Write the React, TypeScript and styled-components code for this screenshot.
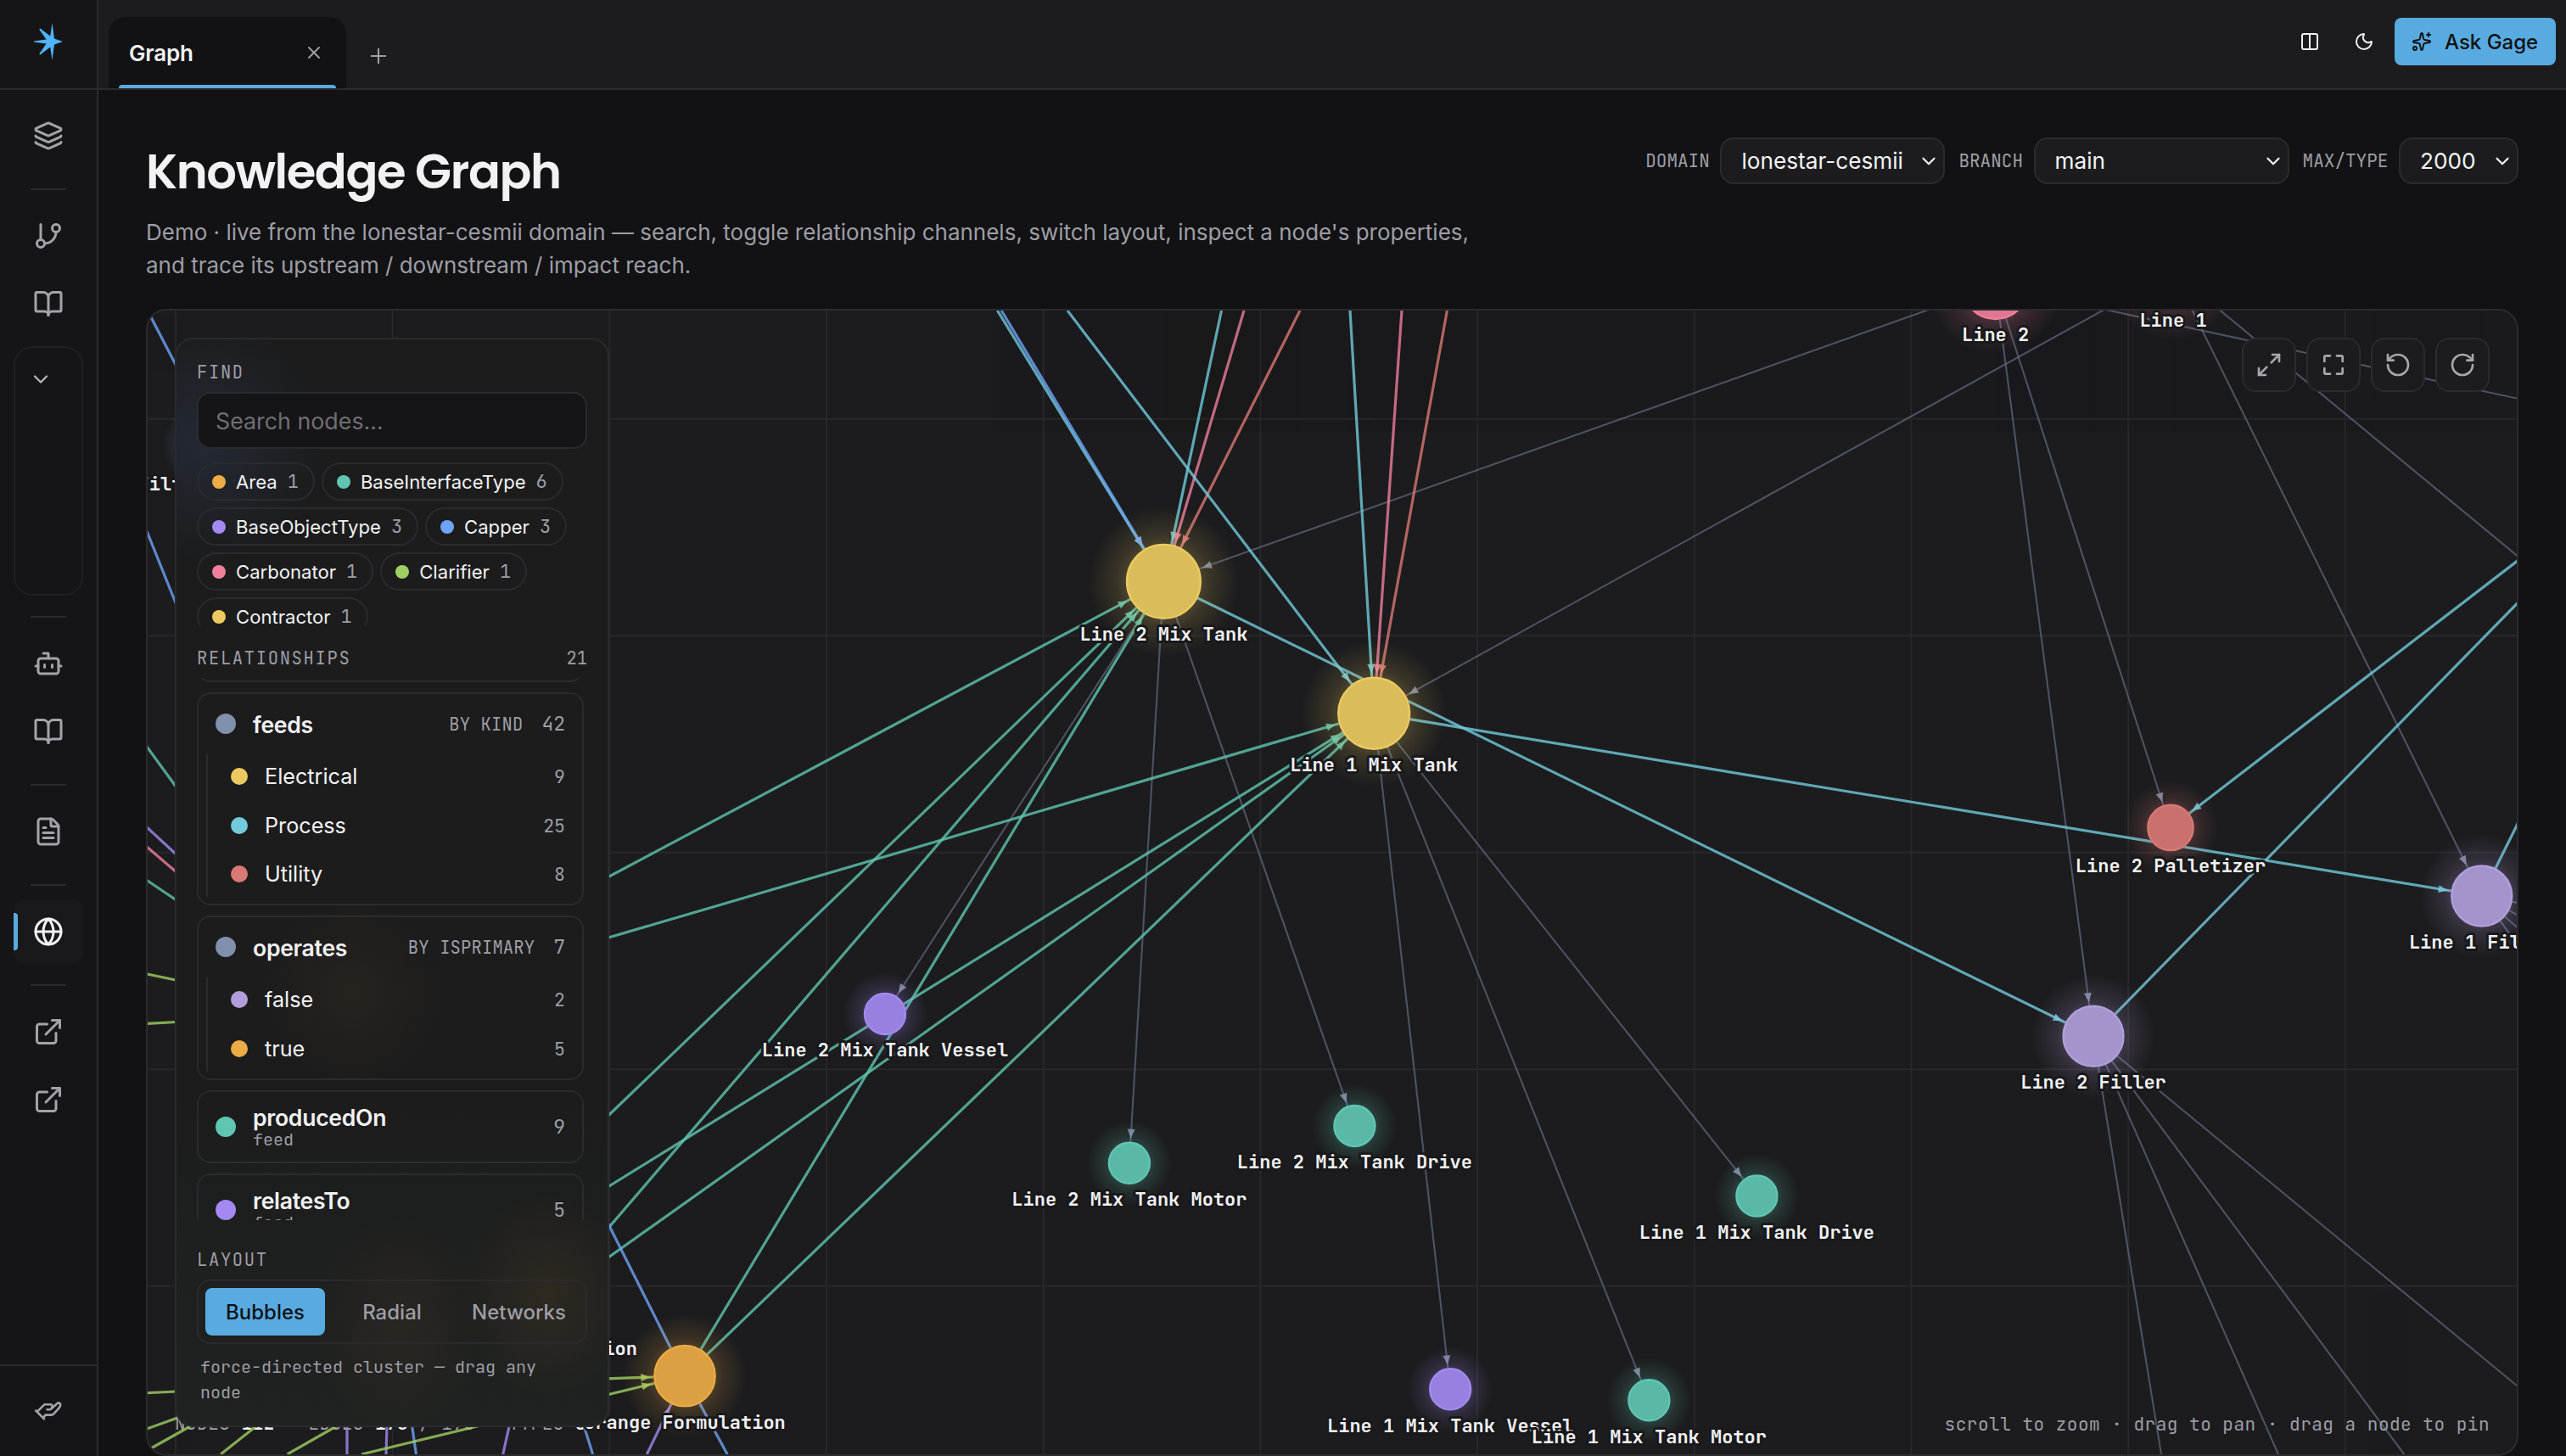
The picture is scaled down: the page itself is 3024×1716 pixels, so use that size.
import React from 'react';
import styled, { createGlobalStyle, css } from 'styled-components';
import {
  Layers, GitBranch, BookOpen, ChevronDown, Bot, FileText, Globe, ExternalLink,
  X, Plus, Columns2, Moon, Sparkles, Maximize2, RotateCcw, RotateCw,
} from 'lucide-react';

const SANS = `Inter, "Liberation Sans", sans-serif`;
const MONO = `"JetBrains Mono", "DejaVu Sans Mono", monospace`;

const c = {
  page: '#121214',
  rail: '#151517',
  surface: '#1c1c1e',
  line: '#2b2b2e',
  text: '#f2f2f3',
  muted: '#9e9ea6',
  accent: '#58abe0',
  ink: '#101214',
};

const hue = {
  yellow: '#ecca60',
  teal: '#5fc6b2',
  purple: '#a389f1',
  lavender: '#b19edb',
  red: '#d97874',
  orange: '#ecab44',
  pink: '#f07f9c',
  blue: '#6ea5f8',
  cyan: '#72cbdd',
  green: '#9fd062',
  slate: '#8190ad',
};

const Global = createGlobalStyle`
  *, *::before, *::after { box-sizing: border-box; }
  html, body { margin: 0; background: ${c.page}; overflow: hidden; }
  button { font: inherit; color: inherit; background: none; border: 0; padding: 0; margin: 0; }
`;

const Shell = styled.div`
  display: grid;
  grid-template-columns: 116px 1fr;
  width: 3024px;
  height: 1716px;
  overflow: hidden;
  background: ${c.page};
  color: ${c.text};
  font-family: ${SANS};
`;

/* ---------- rail ---------- */
const Rail = styled.nav`
  display: flex;
  flex-direction: column;
  border-right: 2px solid ${c.line};
  background: ${c.rail};
`;
const Brand = styled.div`
  height: 106px;
  flex: none;
  border-bottom: 2px solid ${c.line};
  svg { display: block; }
`;
const RailBody = styled.div`
  flex: 1;
  display: flex;
  flex-direction: column;
  gap: 4px;
  padding: 16px 16px 0;
`;
const RailItem = styled.button<{ $active?: boolean }>`
  position: relative;
  display: flex;
  align-items: center;
  justify-content: center;
  width: 82px;
  height: 76px;
  flex: none;
  border-radius: 12px;
  color: ${p => (p.$active ? c.text : '#a3a3ab')};
  background: ${p => (p.$active ? '#19191b' : 'transparent')};
  ${p => p.$active && css`
    &::before {
      content: '';
      position: absolute;
      left: 0;
      top: 16px;
      width: 5px;
      height: 44px;
      border-radius: 0 4px 4px 0;
      background: ${c.accent};
    }
  `}
`;
const RailRule = styled.div`
  width: 42px;
  height: 2px;
  flex: none;
  margin: 20px auto 12px;
  background: ${c.line};
`;
const RailGroup = styled.div`
  width: 82px;
  height: 294px;
  flex: none;
  margin-top: 8px;
  padding: 23px 0 0 16px;
  border: 2px solid #202023;
  border-radius: 22px;
  color: #b4b4bb;
`;
const RailFoot = styled.div`
  display: flex;
  align-items: center;
  justify-content: center;
  height: 108px;
  border-top: 2px solid ${c.line};
  color: #a3a3ab;
`;

/* ---------- top bar ---------- */
const Main = styled.div`
  display: flex;
  flex-direction: column;
  min-width: 0;
`;
const TopBar = styled.header`
  display: flex;
  align-items: flex-end;
  height: 106px;
  flex: none;
  padding: 0 12px;
  border-bottom: 2px solid ${c.line};
  background: ${c.surface};
`;
const Tab = styled.div`
  position: relative;
  display: flex;
  align-items: center;
  justify-content: space-between;
  width: 280px;
  height: 84px;
  padding: 0 26px 0 24px;
  border-radius: 20px 20px 0 0;
  background: ${c.page};
  font-size: 26px;
  font-weight: 600;
  letter-spacing: -0.2px;
  &::after {
    content: '';
    position: absolute;
    left: 12px;
    right: 12px;
    bottom: 0;
    height: 4px;
    border-radius: 4px 4px 0 0;
    background: ${c.accent};
  }
  svg { color: ${c.muted}; }
`;
const NewTab = styled.button`
  display: flex;
  margin: 0 0 24px 24px;
  color: ${c.muted};
`;
const TopActions = styled.div`
  display: flex;
  align-items: center;
  height: 56px;
  margin: 0 0 27px auto;
`;
const IconSlot = styled.span`
  display: flex;
  width: 64px;
  justify-content: center;
`;
const AskButton = styled.button`
  display: flex;
  align-items: center;
  gap: 15px;
  width: 190px;
  height: 56px;
  margin-left: 4px;
  padding-left: 20px;
  border-radius: 8px;
  background: ${c.accent};
  color: ${c.ink};
  font-size: 24px;
  font-weight: 500;
  white-space: nowrap;
`;

/* ---------- page ---------- */
const Page = styled.main`
  flex: 1;
  display: flex;
  flex-direction: column;
  padding: 56px 56px 0;
  min-height: 0;
`;
const PageHead = styled.div`
  display: flex;
  justify-content: space-between;
  height: 202px;
  flex: none;
`;
const Title = styled.h1`
  margin: 0;
  font-family: Poppins, ${SANS};
  font-size: 56px;
  line-height: 82px;
  font-weight: 600;
  letter-spacing: -1.4px;
  font-feature-settings: 'cv11' 1, 'ss03' 1;
`;
const Lead = styled.p`
  margin: 10px 0 0;
  color: ${c.muted};
  font-size: 26px;
  line-height: 39px;
  white-space: nowrap;
`;
const Filters = styled.div`
  display: flex;
  align-items: center;
  height: 55px;
`;
const FilterLabel = styled.label`
  margin: 0 12.6px 0 16px;
  color: ${c.muted};
  font-family: ${MONO};
  font-size: 21px;
`;
const Select = styled.div<{ $w: number }>`
  display: flex;
  align-items: center;
  justify-content: space-between;
  width: ${p => p.$w}px;
  height: 55px;
  padding: 0 4px 0 23px;
  border: 2px solid ${c.line};
  border-radius: 16px;
  background: ${c.surface};
  font-size: 26.2px;
`;

/* ---------- canvas ---------- */
const Canvas = styled.section`
  position: relative;
  height: 1352px;
  flex: none;
  border: 2px solid ${c.line};
  border-radius: 24px;
  background: ${c.surface};
  overflow: hidden;
`;
const Scene = styled.svg`
  position: absolute;
  inset: 0;
  text {
    font-family: ${MONO};
    font-size: 22px;
    font-weight: 700;
    fill: ${c.text};
    stroke: #19191b;
    stroke-width: 6px;
    stroke-linejoin: round;
    paint-order: stroke;
  }
`;
const Stats = styled.div`
  position: absolute;
  left: 32px;
  bottom: 24px;
  display: flex;
  gap: 40px;
  color: ${c.muted};
  font-family: ${MONO};
  font-size: 21px;
  line-height: 24px;
  letter-spacing: 0.46px;
  white-space: pre;
  b { color: ${c.text}; }
`;
const Hint = styled.div`
  position: absolute;
  right: 32px;
  bottom: 23px;
  color: ${c.muted};
  font-family: ${MONO};
  font-size: 21px;
  line-height: 24px;
  letter-spacing: 0.51px;
`;
const Tools = styled.div`
  position: absolute;
  top: 32px;
  right: 32px;
  display: flex;
  gap: 12px;
`;
const Tool = styled.button`
  display: flex;
  align-items: center;
  justify-content: center;
  width: 64px;
  height: 64px;
  border: 2px solid ${c.line};
  border-radius: 16px;
  background: ${c.surface};
  color: #a6a6ad;
`;

/* ---------- side panel ---------- */
const Panel = styled.aside`
  position: absolute;
  left: 32px;
  top: 32px;
  width: 512px;
  height: 1284px;
  display: flex;
  flex-direction: column;
  padding: 27px 24px 0;
  border: 2px solid ${c.line};
  border-radius: 22px;
  background:
    radial-gradient(140px 140px at 34px 120px, rgba(80, 120, 190, 0.14), transparent),
    radial-gradient(110px 110px at 207px 770px, rgba(230, 160, 50, 0.05), transparent),
    radial-gradient(100px 130px at 262px 1160px, rgba(230, 160, 50, 0.05), transparent),
    radial-gradient(100px 120px at 436px 1125px, rgba(230, 160, 50, 0.08), transparent),
    linear-gradient(#1c1c1d 70%, #202221);
`;
const Caption = styled.div`
  display: flex;
  justify-content: space-between;
  height: 24px;
  flex: none;
  color: ${c.muted};
  font-family: ${MONO};
  font-size: 20.5px;
  line-height: 24px;
  letter-spacing: 1.65px;
  span { letter-spacing: 0; }
`;
const Search = styled.div`
  height: 67px;
  flex: none;
  margin: 11px 0 16px;
  padding: 0 20px;
  border: 2px solid ${c.line};
  border-radius: 16px;
  background: ${c.rail};
  color: #6f6f75;
  font-size: 26.8px;
  line-height: 64px;
`;
const Chips = styled.div`
  display: flex;
  flex-wrap: wrap;
  align-content: flex-start;
  gap: 8px;
  height: 192px;
  flex: none;
  margin-bottom: 27px;
  overflow: hidden;
`;
const Chip = styled.div`
  display: flex;
  align-items: center;
  gap: 12px;
  height: 45px;
  padding: 0 17px 0 16px;
  border: 2px solid ${c.line};
  border-radius: 23px;
  font-size: 22.1px;
  white-space: nowrap;
  span { color: ${c.muted}; font-family: ${MONO}; font-size: 22px; }
`;
const Dot = styled.i<{ $size: number; $color: string }>`
  width: ${p => p.$size}px;
  height: ${p => p.$size}px;
  flex: none;
  border-radius: 50%;
  background: ${p => p.$color};
`;
const RelList = styled.div`
  display: flex;
  flex-direction: column;
  gap: 12px;
  height: 639px;
  flex: none;
  margin: 11px 4px 35px 0;
  overflow: hidden;
`;
const Card = styled.div<{ $scrolled?: boolean }>`
  flex: none;
  padding-bottom: 8px;
  border: 2px solid ${c.line};
  border-radius: 16px;
  ${p => p.$scrolled && css`height: 86px; margin-top: -81px;`}
`;
const CardHead = styled.div<{ $compact?: boolean }>`
  display: flex;
  align-items: center;
  height: ${p => (p.$compact ? 82 : 70.5)}px;
  margin-bottom: ${p => (p.$compact ? -8 : 0)}px;
  padding: 0 20px;
`;
const RelName = styled.div`
  flex: 1;
  margin-left: 20px;
  padding-top: 1px;
  font-size: 26.6px;
  line-height: 32px;
  font-weight: 600;
  letter-spacing: -0.3px;
  small {
    display: block;
    margin-top: -2px;
    color: ${c.muted};
    font-family: ${MONO};
    font-size: 20px;
    line-height: 24px;
    font-weight: 400;
    letter-spacing: 0;
  }
`;
const By = styled.span`
  margin-right: 22px;
  color: ${c.muted};
  font-family: ${MONO};
  font-size: 20.5px;
  letter-spacing: 0.15px;
`;
const Count = styled.span<{ $small?: boolean }>`
  color: ${c.muted};
  font-family: ${MONO};
  font-size: ${p => (p.$small ? 21.5 : 23)}px;
`;
const SubList = styled.div`
  display: flex;
  flex-direction: column;
  gap: 4px;
  margin-left: 9px;
  border-left: 2px solid ${c.line};
`;
const SubRow = styled.div`
  display: flex;
  align-items: center;
  height: 53.5px;
  padding: 0 20px 0 27px;
  font-size: 25.2px;
  div { flex: 1; margin-left: 20px; }
`;
const Segments = styled.div`
  display: flex;
  gap: 4px;
  height: 76px;
  flex: none;
  margin: 11px 0 12px;
  padding: 8px;
  border: 2px solid ${c.line};
  border-radius: 16px;
`;
const Segment = styled.button<{ $w?: number; $on?: boolean }>`
  flex: ${p => (p.$w ? `0 0 ${p.$w}px` : '1 1 0')};
  border-radius: 8px;
  background: ${p => (p.$on ? c.accent : 'transparent')};
  color: ${p => (p.$on ? c.ink : c.muted)};
  font-size: 24px;
  font-weight: 500;
`;
const Help = styled.p`
  width: 440px;
  margin: 0;
  padding-left: 4px;
  color: ${c.muted};
  font-family: ${MONO};
  font-size: 20px;
  line-height: 30px;
`;

/* ---------- graph data (scene coordinates) ---------- */
type Node = { id: string; x: number; y: number; r: number; color: string; label?: string };
const nodes: Node[] = [
  { id: 'line1', x: 2561, y: 320, r: 40, color: hue.pink, label: 'Line 1' },
  { id: 'line2', x: 2351.6, y: 337, r: 40, color: hue.pink, label: 'Line 2' },
  { id: 'mix2', x: 1371.4, y: 685.3, r: 44.4, color: hue.yellow, label: 'Line 2 Mix Tank' },
  { id: 'mix1', x: 1619.2, y: 840.7, r: 43, color: hue.yellow, label: 'Line 1 Mix Tank' },
  { id: 'pal2', x: 2558, y: 975.4, r: 27.7, color: hue.red, label: 'Line 2 Palletizer' },
  { id: 'fill1', x: 2924.7, y: 1056, r: 36.5, color: hue.lavender, label: 'Line 1 Filler' },
  { id: 'fill2', x: 2467, y: 1221.3, r: 36.5, color: hue.lavender, label: 'Line 2 Filler' },
  { id: 'ves2', x: 1043, y: 1195, r: 25, color: hue.purple, label: 'Line 2 Mix Tank Vessel' },
  { id: 'drv2', x: 1596.4, y: 1327, r: 25, color: hue.teal, label: 'Line 2 Mix Tank Drive' },
  { id: 'mot2', x: 1330.9, y: 1370.7, r: 25, color: hue.teal, label: 'Line 2 Mix Tank Motor' },
  { id: 'drv1', x: 2070.4, y: 1409.5, r: 25, color: hue.teal, label: 'Line 1 Mix Tank Drive' },
  { id: 'ves1', x: 1709.2, y: 1637.3, r: 25, color: hue.purple, label: 'Line 1 Mix Tank Vessel' },
  { id: 'mot1', x: 1943.4, y: 1650.3, r: 25, color: hue.teal, label: 'Line 1 Mix Tank Motor' },
  { id: 'orange', x: 807, y: 1621.7, r: 36.7, color: hue.orange, label: 'Orange Formulation' },
  { id: 'capper', x: 246, y: 524, r: 27, color: hue.blue },
];
const byId = Object.fromEntries(nodes.map(n => [n.id, n]));

type End = string | [number, number];
type Edge = [from: End, to: End, color: string];
const grey = '#6b7590';
const edges: Edge[] = [
  ['line2', 'mix2', grey],
  ['line1', 'mix1', grey],
  ['line2', 'fill2', grey],
  ['line2', 'pal2', grey],
  ['line2', [2970, 470.4], grey],
  ['line1', 'fill1', grey],
  ['line1', [2970, 658], grey],
  ['mix2', 'ves2', grey],
  ['mix2', 'mot2', grey],
  ['mix2', 'drv2', grey],
  ['mix1', 'ves1', grey],
  ['mix1', 'mot1', grey],
  ['mix1', 'drv1', grey],
  ['fill2', [2547, 1714], grey],
  ['fill2', [2685, 1714], grey],
  ['fill2', [2833.3, 1714], grey],
  ['fill2', [2966, 1633], grey],
  ['fill1', [2972, 1065], grey],
  ['fill1', [2972, 1081], grey],
  ['fill1', [2972, 1098], grey],
  ['fill1', [2972, 1120], grey],
  [[1175.4, 366], 'mix2', hue.cyan],
  [[1180.2, 366], 'mix2', hue.blue],
  [[1439.5, 366], 'mix2', hue.cyan],
  [[1466, 366], 'mix2', hue.pink],
  [[1532, 366], 'mix2', hue.red],
  [[1258, 366], 'mix1', hue.cyan],
  [[1591, 366], 'mix1', hue.cyan],
  [[1652, 366], 'mix1', hue.pink],
  [[1705.4, 366], 'mix1', hue.red],
  ['mix2', 'fill2', hue.cyan],
  ['mix1', 'fill1', hue.cyan],
  [[2972, 657], 'pal2', hue.cyan],
  ['fill2', [2972, 705.5], hue.cyan],
  ['fill1', [2972, 960.8], hue.cyan],
  [[700, 1042.5], 'mix2', hue.teal],
  [[700, 1331], 'mix2', hue.teal],
  [[700, 1467], 'mix2', hue.teal],
  ['orange', 'mix2', hue.teal],
  [[700, 1110], 'mix1', hue.teal],
  [[700, 1409], 'mix1', hue.teal],
  [[700, 1494], 'mix1', hue.teal],
  ['orange', 'mix1', hue.teal],
  ['orange', [700, 1409], hue.blue],
  ['orange', [857.2, 1714], hue.blue],
  [[762.3, 1714], 'orange', hue.purple],
  [[700, 1625.4], 'orange', hue.green],
  [[426, 1714], 'orange', hue.green],
];

/* edges that leave the frame around the side panel */
const strays: [number, number, number, number, string][] = [
  [177, 372, 210, 435.5, hue.blue],
  [173, 626, 208, 713, hue.blue],
  [173, 880, 208, 928, hue.teal],
  [173, 975, 208, 1007.3, hue.purple],
  [173, 998, 208, 1028, hue.pink],
  [173, 1037.5, 208, 1061, hue.teal],
  [173, 1148, 208, 1155.3, hue.green],
  [173, 1206.4, 208, 1204.5, hue.green],
  [173, 1641.6, 208, 1640, hue.green],
  [173, 1684, 212, 1670, hue.green],
  [176, 1708, 226, 1680, hue.green],
  [260, 1714, 303, 1680, hue.green],
  [338.6, 1714, 398, 1680, hue.green],
  [409, 1680, 409, 1714, hue.purple],
  [456, 1680, 455, 1714, hue.purple],
  [485.5, 1680, 490.4, 1714, hue.blue],
  [600.3, 1680, 592.7, 1714, hue.purple],
  [688, 1680, 698.6, 1714, hue.blue],
];

const point = (e: End): [number, number] => (typeof e === 'string' ? [byId[e].x, byId[e].y] : e);

function EdgeMark({ edge }: { edge: Edge }) {
  const [from, to, color] = edge;
  const [x1, y1] = point(from);
  const [x2, y2] = point(to);
  const thin = color === grey;
  const len = Math.hypot(x2 - x1, y2 - y1);
  const ux = (x2 - x1) / len;
  const uy = (y2 - y1) / len;
  let head = null;
  if (typeof to === 'string') {
    const d = byId[to].r + 4;
    const tx = x2 - ux * d;
    const ty = y2 - uy * d;
    const bx = tx - ux * 11;
    const by = ty - uy * 11;
    head = (
      <polygon
        points={`${tx},${ty} ${bx - uy * 4.5},${by + ux * 4.5} ${bx + uy * 4.5},${by - ux * 4.5}`}
        fill={thin ? '#8792ad' : color}
        opacity={0.85}
      />
    );
  }
  return (
    <g>
      <line x1={x1} y1={y1} x2={x2} y2={y2} stroke={color} strokeWidth={thin ? 2.1 : 3.2} opacity={thin ? 0.62 : 0.8} />
      {head}
    </g>
  );
}

function Graph() {
  const cols = Array.from({ length: 11 }, (_, i) => 207 + i * 255.68);
  const rows = Array.from({ length: 5 }, (_, i) => 493.7 + i * 255.5);
  const glows = Array.from(new Set(nodes.map(n => n.color)));
  return (
    <Scene width={2792} height={1348} viewBox="174 366 2792 1348">
      <defs>
        {glows.map(g => (
          <radialGradient key={g} id={`glow-${g.slice(1)}`}>
            <stop offset="0.3" stopColor={g} stopOpacity={0.34} />
            <stop offset="0.62" stopColor={g} stopOpacity={0.14} />
            <stop offset="1" stopColor={g} stopOpacity={0} />
          </radialGradient>
        ))}
      </defs>
      {cols.map(x => <line key={x} x1={x} x2={x} y1={366} y2={1714} stroke="#28282b" strokeWidth={2} />)}
      {rows.map(y => <line key={y} x1={174} x2={2966} y1={y} y2={y} stroke="#28282b" strokeWidth={2} />)}
      {strays.map(([x1, y1, x2, y2, s], i) => (
        <line key={i} x1={x1} y1={y1} x2={x2} y2={y2} stroke={s} strokeWidth={3.2} opacity={0.8} />
      ))}
      {edges.map((e, i) => <EdgeMark key={i} edge={e} />)}
      <text x={162.6} y={577.5}>Filt</text>
      <text x={751} y={1596.5} textAnchor="end">Formulation</text>
      {nodes.map(n => (
        <g key={n.id}>
          <circle cx={n.x} cy={n.y} r={n.r * 2} fill={`url(#glow-${n.color.slice(1)})`} />
          <circle cx={n.x} cy={n.y} r={n.r} fill={c.surface} />
          <circle cx={n.x} cy={n.y} r={n.r - 1} fill={n.color} fillOpacity={0.92} stroke={n.color} strokeWidth={2.4} />
          {n.label && <text x={n.x} y={n.y + n.r + 25.3} textAnchor="middle">{n.label}</text>}
        </g>
      ))}
    </Scene>
  );
}

const Logo = () => (
  <svg width="114" height="104" viewBox="0 0 114 104">
    <path
      d="M61.5 27 64 45.6 74 49 64 52.4 61.5 71 59.2 55.5 47.4 64.6 46.2 63.4 54.6 51.4 40 49.6V48.4L54.6 46.6 46.2 34.8 47.4 33.6 59.2 42.5Z"
      fill="#4fb2fb"
    />
  </svg>
);

const Palm = () => (
  <svg width="34" height="24" viewBox="0 0 34 24" fill="none" stroke="currentColor" strokeWidth="2.6" strokeLinecap="round" strokeLinejoin="round">
    <path d="M2.3 11.5 12 21.3 M4.5 12.2 12.5 4.2H19.5C21.6 4.2 22 6 21.3 7.6 20.8 9 20 10.2 18.5 10.2H15.5 M20.6 9.2 27.5 3C29.2 1.6 31.6 2.6 31.2 5 31 6.6 30.2 7.6 29.2 8.8L23.5 15.2C22.6 16.2 21.8 16.6 20.4 16.6H13.6L11.2 19.6" />
  </svg>
);

const Frame = () => (
  <svg width="32" height="32" viewBox="0 0 24 24" fill="none" stroke="currentColor" strokeWidth="2" strokeLinecap="round" strokeLinejoin="round">
    <path d="M9 4H5a1 1 0 0 0-1 1v4M15 4h4a1 1 0 0 1 1 1v4M20 15v4a1 1 0 0 1-1 1h-4M9 20H5a1 1 0 0 1-1-1v-4" />
  </svg>
);

const chips: [string, number, string][] = [
  ['Area', 1, hue.orange],
  ['BaseInterfaceType', 6, hue.teal],
  ['BaseObjectType', 3, hue.purple],
  ['Capper', 3, hue.blue],
  ['Carbonator', 1, hue.pink],
  ['Clarifier', 1, hue.green],
  ['Contractor', 1, hue.yellow],
];

type Rel = { name: string; color: string; count: number; by?: string; kind?: string; subs?: [string, number, string][] };
const relations: Rel[] = [
  { name: 'feeds', color: hue.slate, count: 42, by: 'BY KIND', subs: [['Electrical', 9, hue.yellow], ['Process', 25, hue.cyan], ['Utility', 8, hue.red]] },
  { name: 'operates', color: hue.slate, count: 7, by: 'BY ISPRIMARY', subs: [['false', 2, hue.lavender], ['true', 5, hue.orange]] },
  { name: 'producedOn', color: hue.teal, count: 9, kind: 'feed' },
  { name: 'relatesTo', color: hue.purple, count: 5, kind: 'feed' },
];

const filters: [string, string, number][] = [
  ['DOMAIN', 'lonestar-cesmii', 265],
  ['BRANCH', 'main', 301],
  ['MAX/TYPE', '2000', 141],
];

export default function App() {
  return (
    <Shell>
      <Global />
      <Rail>
        <Brand><Logo /></Brand>
        <RailBody>
          <RailItem><Layers size={36} /></RailItem>
          <RailRule />
          <RailItem><GitBranch size={36} /></RailItem>
          <RailItem><BookOpen size={36} /></RailItem>
          <RailGroup><ChevronDown size={28} /></RailGroup>
          <RailRule />
          <RailItem><Bot size={36} /></RailItem>
          <RailItem><BookOpen size={36} /></RailItem>
          <RailRule />
          <RailItem><FileText size={36} /></RailItem>
          <RailRule />
          <RailItem $active><Globe size={36} /></RailItem>
          <RailRule />
          <RailItem><ExternalLink size={36} /></RailItem>
          <RailItem><ExternalLink size={36} /></RailItem>
        </RailBody>
        <RailFoot><Palm /></RailFoot>
      </Rail>

      <Main>
        <TopBar>
          <Tab>Graph<X size={24} /></Tab>
          <NewTab><Plus size={28} strokeWidth={1.8} /></NewTab>
          <TopActions>
            <IconSlot><Columns2 size={24} /></IconSlot>
            <IconSlot><Moon size={24} /></IconSlot>
            <AskButton><Sparkles size={24} /><span>Ask Gage</span></AskButton>
          </TopActions>
        </TopBar>

        <Page>
          <PageHead>
            <div>
              <Title>Knowledge Graph</Title>
              <Lead>
                Demo · live from the lonestar-cesmii domain — search, toggle relationship channels, switch layout, inspect a node's properties,
                <br />
                and trace its upstream / downstream / impact reach.
              </Lead>
            </div>
            <Filters>
              {filters.map(([label, value, w]) => (
                <React.Fragment key={label}>
                  <FilterLabel>{label}</FilterLabel>
                  <Select $w={w}>{value}<ChevronDown size={26} /></Select>
                </React.Fragment>
              ))}
            </Filters>
          </PageHead>

          <Canvas>
            <Stats>
              <span>NODES <b>112</b></span>
              <span>EDGES <b>178</b> / 178</span>
              <span>TYPES <b>32</b></span>
            </Stats>
            <Graph />
            <Hint>scroll to zoom · drag to pan · drag a node to pin</Hint>
            <Tools>
              <Tool><Maximize2 size={32} /></Tool>
              <Tool><Frame /></Tool>
              <Tool><RotateCcw size={32} /></Tool>
              <Tool><RotateCw size={32} /></Tool>
            </Tools>

            <Panel>
              <Caption>FIND</Caption>
              <Search>Search nodes…</Search>
              <Chips>
                {chips.map(([name, n, color]) => (
                  <Chip key={name}><Dot $size={16} $color={color} />{name}<span>{n}</span></Chip>
                ))}
              </Chips>
              <Caption>RELATIONSHIPS<span>21</span></Caption>
              <RelList>
                <Card $scrolled />
                {relations.map(r => (
                  <Card key={r.name}>
                    <CardHead $compact={!!r.kind}>
                      <Dot $size={24} $color={r.color} />
                      <RelName>{r.name}{r.kind && <small>{r.kind}</small>}</RelName>
                      {r.by && <By>{r.by}</By>}
                      <Count>{r.count}</Count>
                    </CardHead>
                    {r.subs && (
                      <SubList>
                        {r.subs.map(([name, n, color]) => (
                          <SubRow key={name}><Dot $size={20} $color={color} /><div>{name}</div><Count $small>{n}</Count></SubRow>
                        ))}
                      </SubList>
                    )}
                  </Card>
                ))}
              </RelList>
              <Caption>LAYOUT</Caption>
              <Segments>
                <Segment $on $w={141}>Bubbles</Segment>
                <Segment>Radial</Segment>
                <Segment $w={141}>Networks</Segment>
              </Segments>
              <Help>force-directed cluster — drag any node</Help>
            </Panel>
          </Canvas>
        </Page>
      </Main>
    </Shell>
  );
}
